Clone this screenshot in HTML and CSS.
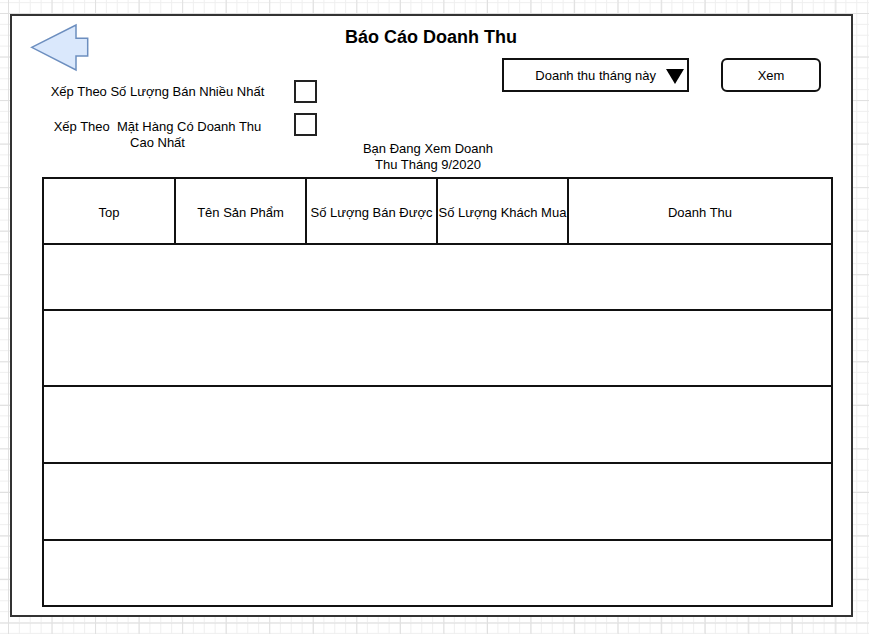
FILE: index.html
```html
<!DOCTYPE html>
<html lang="vi">
<head>
<meta charset="utf-8">
<title>Báo Cáo Doanh Thu</title>
<link rel="stylesheet" href="styles.css">
</head>
<body>
<div class="frame">
  <div class="head">
    <svg class="back" width="60" height="50" viewBox="0 0 60 50" aria-label="Quay lại">
      <polygon points="1.7,24.3 46,2 46,15.3 57.7,15.3 57.7,33 46,33 46,47" fill="#dae8fc" stroke="#6c8ebf" stroke-width="1.5" stroke-linejoin="miter"/>
    </svg>
    <h1 class="title">Báo Cáo Doanh Thu</h1>
    <div class="options">
      <div class="opt">
        <span class="opt-label">Xếp Theo Số Lượng Bán Nhiều Nhất</span>
        <span class="check"></span>
      </div>
      <div class="opt opt-top">
        <span class="opt-label">Xếp Theo&nbsp; Mặt Hàng Có Doanh Thu Cao Nhất</span>
        <span class="check"></span>
      </div>
    </div>
    <div class="controls">
      <div class="select"><span>Doanh thu tháng này</span><span class="caret"></span></div>
      <div class="btn">Xem</div>
    </div>
    <div class="subtitle">Bạn Đang Xem Doanh<br>Thu Tháng 9/2020</div>
  </div>
  <table class="grid">
    <colgroup>
      <col class="c1"><col class="c2"><col class="c3"><col class="c4"><col class="c5">
    </colgroup>
    <tr class="r-head"><th>Top</th><th>Tên Sản Phẩm</th><th>Số Lượng Bán Được</th><th>Số Lượng Khách Mua</th><th>Doanh Thu</th></tr>
    <tr class="r-a"><td colspan="5"></td></tr>
    <tr class="r-b"><td colspan="5"></td></tr>
    <tr class="r-c"><td colspan="5"></td></tr>
    <tr class="r-c"><td colspan="5"></td></tr>
    <tr class="r-d"><td colspan="5"></td></tr>
  </table>
</div>
</body>
</html>
```

FILE: styles.css
```css
html, body {
  margin: 0;
  padding: 0;
  width: 869px;
  height: 634px;
  overflow: hidden;
}
body {
  font-family: "Liberation Sans", Arial, sans-serif;
  font-size: 13px;
  color: #000;
  background-color: #fff;
  background-image:
    linear-gradient(to right, #e0e0e0 1px, transparent 1px),
    linear-gradient(to bottom, #e0e0e0 1px, transparent 1px),
    linear-gradient(to right, #efefef 1px, transparent 1px),
    linear-gradient(to bottom, #efefef 1px, transparent 1px);
  background-size: 43.55px 43.55px, 43.55px 43.55px, 10.89px 10.89px, 10.89px 10.89px;
  background-position: 8px 13px, 8px 13px, 8px 13px, 8px 13px;
}
.frame {
  margin: 14px 0 0 10px;
  width: 843px;
  height: 603px;
  box-sizing: border-box;
  border: 2px solid #333;
  background: #fff;
  padding: 0 20px 10px 31px;
  display: flex;
  flex-direction: column;
}
.head {
  display: grid;
  grid-template-columns: 1fr auto;
  grid-template-rows: 42px 34px 86px;
  height: 162px;
}
.back {
  grid-column: 1;
  grid-row: 1 / span 2;
  margin: 7px 0 0 -13px;
  display: block;
}
.title {
  grid-column: 1 / -1;
  grid-row: 1;
  justify-self: center;
  margin: 10px 12px 0 0;
  font-size: 18px;
  line-height: 22px;
  font-weight: bold;
}
.options {
  grid-column: 1;
  grid-row: 2 / span 2;
  margin-top: 22px;
  display: flex;
  flex-direction: column;
  gap: 10px;
}
.opt {
  display: flex;
  align-items: center;
  gap: 21px;
}
.opt-top {
  align-items: flex-start;
}
.opt-label {
  width: 231px;
  margin-left: -1px;
  text-align: center;
  line-height: 16px;
}
.opt-top .opt-label {
  margin-top: 6px;
}
.check {
  width: 23px;
  height: 23px;
  box-sizing: border-box;
  border: 2px solid #222;
  flex: none;
}
.controls {
  grid-column: 2;
  grid-row: 2;
  display: flex;
  gap: 32px;
  margin-right: 10px;
}
.select {
  width: 187px;
  height: 34px;
  box-sizing: border-box;
  border: 2px solid #111;
  display: flex;
  align-items: center;
  justify-content: flex-end;
  gap: 10px;
  padding-right: 3px;
}
.caret {
  width: 0;
  height: 0;
  border-left: 9.5px solid transparent;
  border-right: 9.5px solid transparent;
  border-top: 15px solid #000;
  margin-top: 2px;
}
.btn {
  width: 100px;
  height: 34px;
  box-sizing: border-box;
  border: 2px solid #111;
  border-radius: 6px;
  display: flex;
  align-items: center;
  justify-content: center;
}
.subtitle {
  grid-column: 1 / -1;
  grid-row: 3;
  justify-self: center;
  margin: 49px 18px 0 0;
  text-align: center;
  line-height: 16px;
}
.grid {
  width: 789px;
  margin: -1px 0 0 -1px;
  border-collapse: collapse;
  table-layout: fixed;
  border: 2px solid #111;
}
.grid th, .grid td {
  border: 2px solid #111;
  padding: 0;
  font-weight: normal;
  text-align: center;
  vertical-align: middle;
  white-space: nowrap;
  overflow: hidden;
}
.grid th {
  padding-top: 2px;
}
.c1 { width: 132px; }
.c2 { width: 131px; }
.c3 { width: 131px; }
.c4 { width: 131px; }
.c5 { width: 264px; }
.r-head { height: 66px; }
.r-a { height: 66px; }
.r-b { height: 76px; }
.r-c { height: 77px; }
.r-d { height: 66px; }
```
